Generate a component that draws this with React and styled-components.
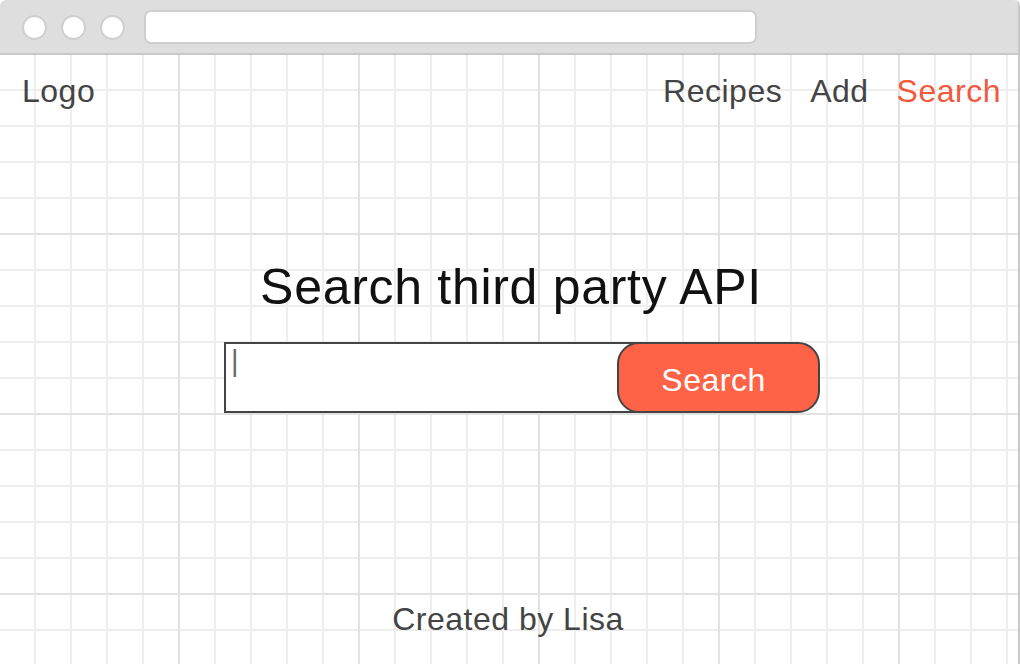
import React from 'react';
import styled, { createGlobalStyle } from 'styled-components';

const GlobalStyle = createGlobalStyle`
  html, body {
    margin: 0;
    padding: 0;
    background: #ffffff;
  }
  body {
    font-family: "Liberation Sans", Arial, sans-serif;
  }
`;

const Window = styled.div`
  width: 1020px;
  height: 664px;
  box-sizing: border-box;
  display: flex;
  flex-direction: column;
  border-right: 2px solid #c8c8c8;
  border-top-left-radius: 6px;
  border-top-right-radius: 6px;
  overflow: hidden;
`;

const Chrome = styled.div`
  height: 53px;
  flex-shrink: 0;
  background: #dedede;
  border-bottom: 2px solid #c8c8c8;
  display: flex;
  align-items: center;
  padding-left: 22px;
  gap: 14px;
`;

const Dot = styled.span`
  width: 25px;
  height: 25px;
  box-sizing: border-box;
  border-radius: 50%;
  background: #ffffff;
  border: 2px solid #cfcfcf;
  margin-top: 1px;
`;

const AddressBar = styled.div`
  width: 613px;
  height: 34px;
  box-sizing: border-box;
  margin-left: 5px;
  background: #ffffff;
  border: 2px solid #cfcfcf;
  border-radius: 7px;
`;

const Page = styled.div`
  flex: 1;
  display: flex;
  flex-direction: column;
  background-color: #ffffff;
  background-image:
    linear-gradient(to right, transparent 178px, #e2e2e2 178px, #e2e2e2 180px),
    linear-gradient(to bottom, transparent 178px, #e2e2e2 178px, #e2e2e2 180px),
    linear-gradient(to right, transparent 34px, #eeeeee 34px, #eeeeee 36px),
    linear-gradient(to bottom, transparent 34px, #eeeeee 34px, #eeeeee 36px);
  background-size: 180px 180px, 180px 180px, 36px 36px, 36px 36px;
  background-position: 0 0;
`;

const Nav = styled.nav`
  display: flex;
  justify-content: space-between;
  align-items: center;
  padding: 18px 17px 0 22px;
`;

const NavText = styled.span`
  font-size: 32px;
  line-height: 36px;
  letter-spacing: 0.5px;
  color: ${props => (props.active ? '#f05a40' : '#444444')};
`;

const NavLinks = styled.div`
  display: flex;
  gap: 28px;
`;

const Main = styled.main`
  flex: 1;
  display: flex;
  flex-direction: column;
  align-items: center;
  padding-top: 153px;
`;

const Heading = styled.h1`
  margin: 0 0 0 4px;
  font-size: 50px;
  line-height: 50px;
  letter-spacing: 0.7px;
  font-weight: normal;
  color: #111111;
`;

const SearchRow = styled.div`
  display: flex;
  margin-top: 30px;
  margin-left: 26px;
`;

const InputBox = styled.div`
  width: 420px;
  height: 71px;
  box-sizing: border-box;
  border: 2px solid #444444;
  background: #ffffff;
  padding: 2px 0 0 5px;
  font-size: 29px;
  line-height: 30px;
  color: #666666;
`;

const SearchButton = styled.button`
  width: 203px;
  height: 71px;
  margin-left: -27px;
  box-sizing: border-box;
  border: 2px solid #444444;
  border-radius: 22px;
  background: #ff6347;
  color: #ffffff;
  font-family: "Liberation Sans", Arial, sans-serif;
  font-size: 32px;
  letter-spacing: 0.5px;
  padding: 6px 10px 0 0;
  cursor: pointer;
`;

const Footer = styled.footer`
  text-align: center;
  font-size: 32px;
  line-height: 36px;
  letter-spacing: 0.5px;
  color: #444444;
  padding-bottom: 27px;
  margin-right: 2px;
`;

export default function App() {
  return (
    <>
      <GlobalStyle />
      <Window>
        <Chrome>
          <Dot />
          <Dot />
          <Dot />
          <AddressBar />
        </Chrome>
        <Page>
          <Nav>
            <NavText>Logo</NavText>
            <NavLinks>
              <NavText>Recipes</NavText>
              <NavText>Add</NavText>
              <NavText active>Search</NavText>
            </NavLinks>
          </Nav>
          <Main>
            <Heading>Search third party API</Heading>
            <SearchRow>
              <InputBox>|</InputBox>
              <SearchButton>Search</SearchButton>
            </SearchRow>
          </Main>
          <Footer>Created by Lisa</Footer>
        </Page>
      </Window>
    </>
  );
}
